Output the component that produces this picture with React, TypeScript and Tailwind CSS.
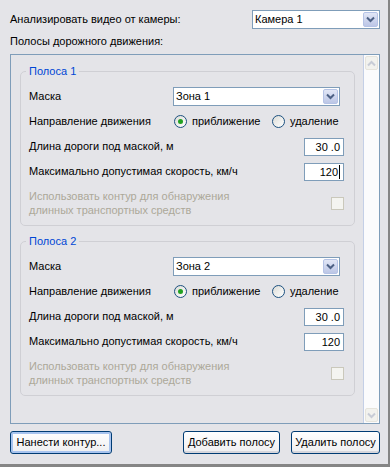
import React from "react";

const font = { fontFamily: '"Liberation Sans", Arial, sans-serif' };

const Chevron: React.FC<{ color?: string; up?: boolean }> = ({ color = "#4d6185", up }) => (
  <svg width="9" height="7" viewBox="0 0 9 7" className={up ? "rotate-180" : ""}>
    <path d="M1 1.5 L4.5 5 L8 1.5" fill="none" stroke={color} strokeWidth="2" />
  </svg>
);

const Combo: React.FC<{ value: string; className: string }> = ({ value, className }) => (
  <div className={`flex h-[19px] items-stretch border border-[#7f9db9] bg-white ${className}`}>
    <span className="flex-1 pl-[2px] leading-[17px]">{value}</span>
    <span className="m-px flex w-[15px] items-center justify-center rounded-[2px] border border-[#b5c3e6] bg-gradient-to-b from-[#e2e7f6] to-[#bcc6e6]">
      <Chevron />
    </span>
  </div>
);

const Radio: React.FC<{ checked?: boolean; label: string }> = ({ checked, label }) => (
  <label className="flex items-center gap-[5px]">
    <span className="flex h-[13px] w-[13px] items-center justify-center rounded-full border border-[#1c5180] bg-gradient-to-br from-[#dcdcd7] to-white">
      {checked && <span className="h-[5px] w-[5px] rounded-full bg-[#21a121]" />}
    </span>
    {label}
  </label>
);

const NumBox: React.FC<{ value: string; caret?: boolean }> = ({ value, caret }) => (
  <div className="flex h-[18px] w-[40px] items-center justify-end border border-[#7f9db9] bg-white pr-[3px] leading-[16px]">
    {value}
    {caret && <span className="ml-px h-[14px] w-px bg-black" />}
  </div>
);

const Row: React.FC<{ label: string; children: React.ReactNode }> = ({ label, children }) => (
  <div className="flex h-[25px] items-center justify-between">
    <span>{label}</span>
    {children}
  </div>
);

const Lane: React.FC<{ n: number; caret?: boolean }> = ({ n, caret }) => (
  <fieldset className="rounded-[5px] border border-[#cfcfd4] pb-[8px] pl-[8px] pr-[10px] pt-[6px]">
    <legend className="-ml-[3px] px-[3px] leading-[14px] text-[#0046d5]">Полоса {n}</legend>
    <Row label="Маска">
      <Combo value={`Зона ${n}`} className="mr-[4px] w-[167px]" />
    </Row>
    <Row label="Направление движения">
      <div className="grid w-[170px] grid-cols-[98px_1fr] items-center">
        <Radio checked label="приближение" />
        <Radio label="удаление" />
      </div>
    </Row>
    <Row label="Длина дороги под маской, м">
      <NumBox value="30 .0" />
    </Row>
    <Row label="Максимально допустимая скорость, км/ч">
      <NumBox value="120" caret={caret} />
    </Row>
    <div className="mt-[5px] flex items-center justify-between text-[#aca899]">
      <span className="leading-[14px]">
        Использовать контур для обнаружения
        <br />
        длинных транспортных средств
      </span>
      <span className="h-[13px] w-[13px] border border-[#cac8bb] bg-[#f4f4f0]" />
    </div>
  </fieldset>
);

const Button: React.FC<{ label: string; focused?: boolean; className?: string }> = ({ label, focused, className }) => (
  <button
    className={`h-[23px] whitespace-nowrap rounded-[3px] border border-[#003c74] bg-gradient-to-b from-white to-[#eeeef0] px-[2px] leading-[19px] text-black ${
      focused ? "shadow-[inset_0_0_0_2px_#a8c4ef]" : "shadow-[inset_0_-2px_0_#d6d6dc]"
    } ${className ?? ""}`}
  >
    {label}
  </button>
);

export default function App() {
  return (
    <div
      style={font}
      className="relative h-[467px] w-[390px] overflow-hidden border-b-[3px] border-r-[2px] border-b-[#858585] border-r-[#858585] bg-[#e4e4e8] text-[11px] text-black"
    >
      <div className="flex items-center justify-between pl-[10px] pr-[8px] pt-[10px]">
        <span>Анализировать видео от камеры:</span>
        <Combo value="Камера 1" className="w-[128px]" />
      </div>
      <div className="mt-[5px] pl-[10px] leading-[14px]">Полосы дорожного движения:</div>

      <div className="ml-[10px] mr-[8px] mt-[6px] flex h-[370px] border border-[#7f9db9]">
        <div className="flex flex-1 flex-col gap-[8px] pl-[9px] pr-[8px] pt-[9px]">
          <Lane n={1} caret />
          <Lane n={2} />
        </div>
        <div className="flex w-[16px] flex-col justify-between border-l border-[#c4cfe6] bg-[#fbfbfc] p-px">
          <span className="flex h-[14px] items-center justify-center rounded-[2px] border border-[#e6e4dc] bg-[#f2f2ee]">
            <Chevron up color="#c8ccd6" />
          </span>
          <span className="flex h-[14px] items-center justify-center rounded-[2px] border border-[#e6e4dc] bg-[#f2f2ee]">
            <Chevron color="#c8ccd6" />
          </span>
        </div>
      </div>

      <div className="flex items-center pl-[10px] pr-[8px] pt-[7px]">
        <Button label="Нанести контур..." focused className="w-[102px]" />
        <Button label="Добавить полосу" className="ml-auto w-[97px]" />
        <Button label="Удалить полосу" className="ml-[11px] w-[89px]" />
      </div>
    </div>
  );
}
